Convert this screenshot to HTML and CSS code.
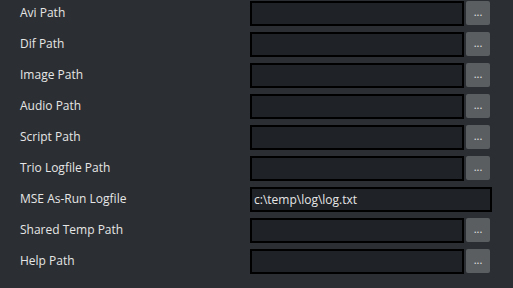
FILE: index.html
```html
<!DOCTYPE html>
<html lang="en">
<head>
    <meta charset="UTF-8">
    <title>Paths</title>
    <link rel="stylesheet" href="styles.css">
</head>
<body>
    <div class="settings">
        <label class="label">Avi Path</label>
        <div class="field"><input class="path" type="text"><button class="browse">...</button></div>

        <label class="label">Dif Path</label>
        <div class="field"><input class="path" type="text"><button class="browse">...</button></div>

        <label class="label">Image Path</label>
        <div class="field"><input class="path" type="text"><button class="browse">...</button></div>

        <label class="label">Audio Path</label>
        <div class="field"><input class="path" type="text"><button class="browse">...</button></div>

        <label class="label">Script Path</label>
        <div class="field"><input class="path" type="text"><button class="browse">...</button></div>

        <label class="label">Trio Logfile Path</label>
        <div class="field"><input class="path" type="text"><button class="browse">...</button></div>

        <label class="label">MSE As-Run Logfile</label>
        <div class="field"><input class="path wide" type="text" value="c:\temp\log\log.txt"></div>

        <label class="label">Shared Temp Path</label>
        <div class="field"><input class="path" type="text"><button class="browse">...</button></div>

        <label class="label">Help Path</label>
        <div class="field"><input class="path" type="text"><button class="browse">...</button></div>
    </div>
</body>
</html>
```

FILE: styles.css
```css
body {
    margin: 0;
    background-color: #2b2e32;
    font-family: "Open Sans", "Noto Sans", sans-serif;
    font-size: 12px;
    color: #e6e6e6;
}

.settings {
    display: grid;
    grid-template-columns: 230px 242px;
    grid-auto-rows: 25px;
    row-gap: 6px;
    padding: 1px 0 0 20px;
}

.label {
    display: flex;
    align-items: center;
    padding-bottom: 2px;
}

.field {
    display: flex;
    gap: 2px;
}

.path {
    width: 214px;
    height: 25px;
    box-sizing: border-box;
    margin: 0;
    border: 2px solid #000;
    background-color: #1f2226;
    color: #e6e6e6;
    font-family: inherit;
    font-size: 12px;
    padding: 0 2px;
    outline: none;
}

.path.wide {
    width: 242px;
}

.browse {
    width: 24px;
    height: 24px;
    margin: 0;
    padding: 0 0 4px;
    border: none;
    border-radius: 2px;
    background-color: #5b5e61;
    color: #e6e6e6;
    font-family: inherit;
    font-size: 11px;
    cursor: pointer;
}
```
